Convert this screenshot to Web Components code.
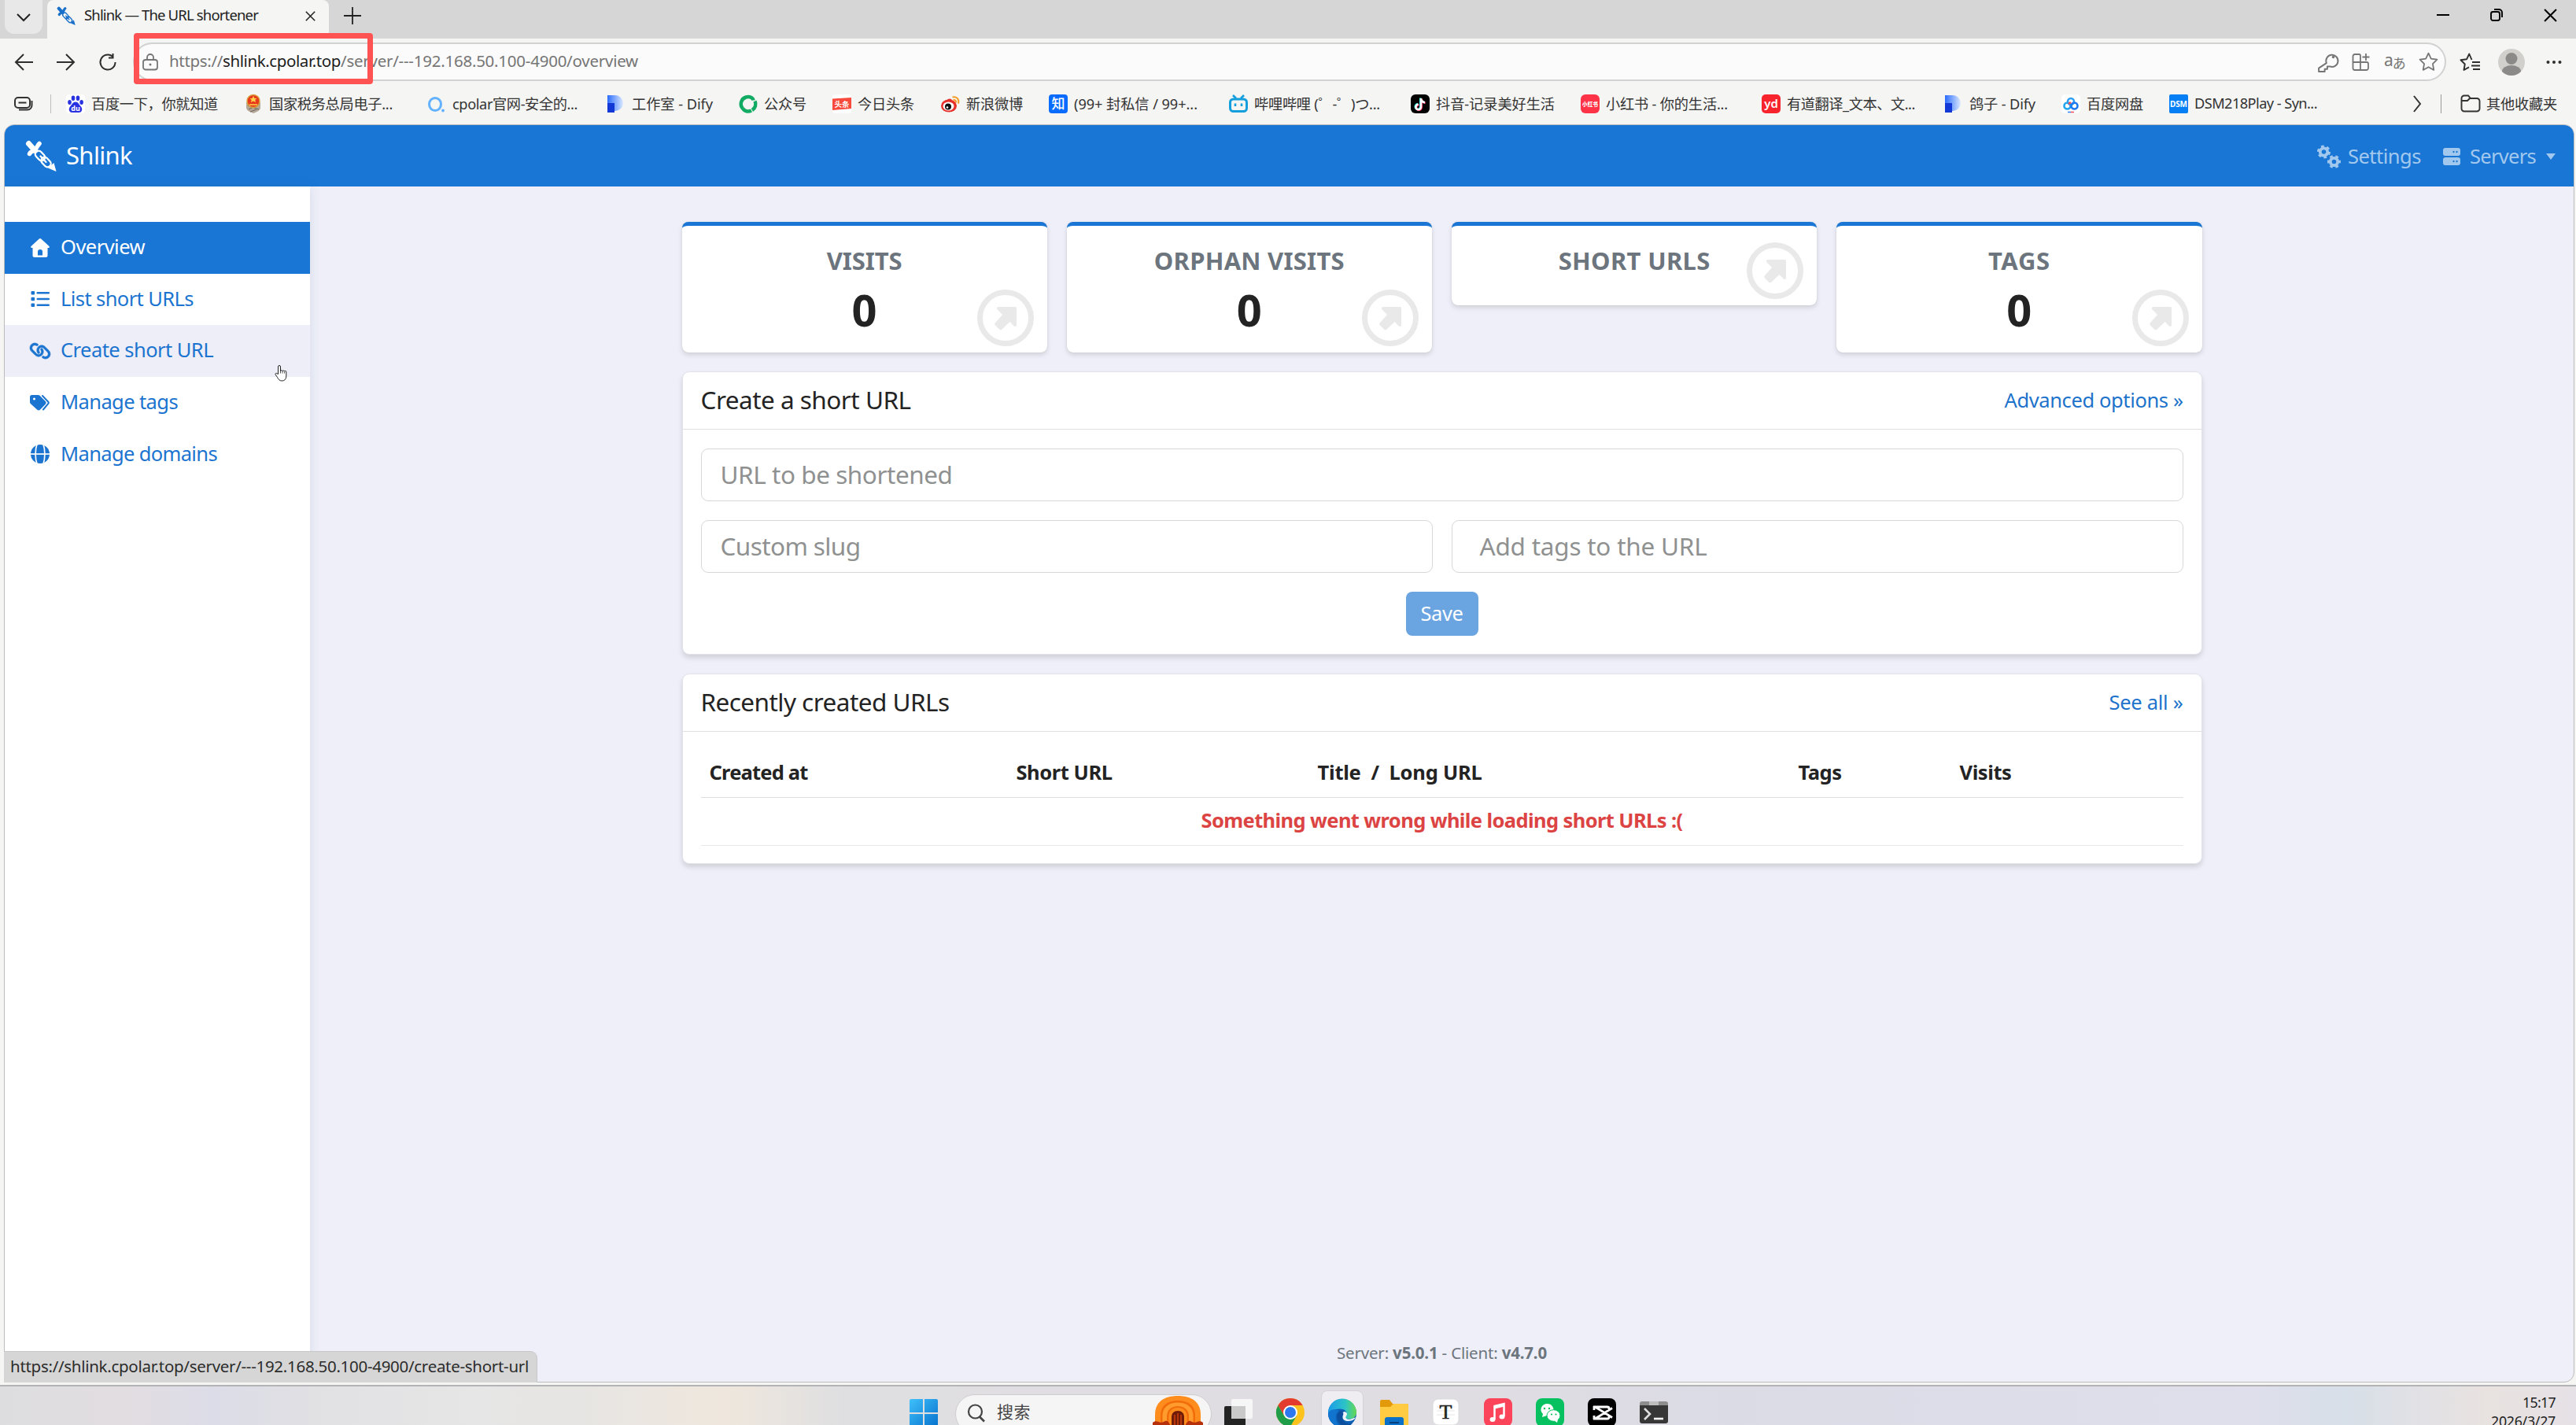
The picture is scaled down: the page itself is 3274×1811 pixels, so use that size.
<!DOCTYPE html>
<html lang="zh-CN">
<head>
<meta charset="utf-8">
<title>Shlink — The URL shortener</title>
<style>
  html, body { margin: 0; height: 100%; }
  body {
    overflow: hidden;
    font-family: "Noto Sans", "Noto Sans CJK SC", sans-serif;
    color: #232323;
    background: #f5f5f4;
  }
</style>
</head>
<body>
<desktop-screen></desktop-screen>

<script>
const ICONS = {
  // browser chrome
  chevronDown: ["0 0 20 12", `<path d="M2 2l8 8 8-8" fill="none" stroke="currentColor" stroke-width="2"/>`],
  chevronRight: ["0 0 12 22", `<path d="M2 1l8 10-8 10" fill="none" stroke="currentColor" stroke-width="2"/>`],
  close: ["0 0 16 16", `<path d="M1 1l14 14M15 1L1 15" fill="none" stroke="currentColor" stroke-width="1.9"/>`],
  plus: ["0 0 22 22", `<path d="M11 0v22M0 11h22" stroke="currentColor" stroke-width="1.8"/>`],
  minimize: ["0 0 16 16", `<path d="M0 8h16" stroke="currentColor" stroke-width="2"/>`],
  restore: ["0 0 16 16", `<rect x="1" y="4" width="11" height="11" rx="2.5" fill="none" stroke="currentColor" stroke-width="1.9"/><path d="M5 1h6a4 4 0 0 1 4 4v6" fill="none" stroke="currentColor" stroke-width="1.9"/>`],
  back: ["0 0 24 22", `<path d="M24 11H2M12 1L2 11l10 10" fill="none" stroke="currentColor" stroke-width="2"/>`],
  forward: ["0 0 24 22", `<path d="M0 11h22M12 1l10 10-10 10" fill="none" stroke="currentColor" stroke-width="2"/>`],
  reload: ["0 0 22 22", `<path d="M20.500 11A9.500 9.500 0 1 1 17 3.700M17.500 0v5.500h-5.500" fill="none" stroke="currentColor" stroke-width="2"/>`],
  lock: ["0 0 20 22", `<rect x="1" y="8" width="18" height="12.500" rx="3" fill="none" stroke="currentColor" stroke-width="1.800"/><path d="M6 8V5a4 4 0 0 1 8 0v3" fill="none" stroke="currentColor" stroke-width="1.800"/><circle cx="10" cy="14" r="1.500" fill="currentColor"/>`],
  key: ["0 0 24 24", `<path d="M10 13a7 7 0 1 1 4 4l-3 0v3H8v3H1v-4z" fill="none" stroke="currentColor" stroke-width="1.800" stroke-linejoin="round"/><circle cx="18" cy="6" r="1.600" fill="currentColor"/>`],
  apps: ["0 0 24 24", `<path d="M11 12V3.500a1.500 1.500 0 0 0-1.500-1.500H4a2.500 2.500 0 0 0-2.500 2.500v15A2.500 2.500 0 0 0 4 22h14.500a2.500 2.500 0 0 0 2.500-2.500V14a2 2 0 0 0-2-2zM1.500 12H11v10M18 1v9M13.500 5.500h9" fill="none" stroke="currentColor" stroke-width="1.800"/>`],
  star: ["0 0 24 24", `<path d="M12 1.500l3.200 6.800 7.300 1-5.300 5.200 1.300 7.500L12 18.400 5.500 22l1.300-7.500L1.500 9.300l7.300-1z" fill="none" stroke="currentColor" stroke-width="1.700" stroke-linejoin="round"/>`],
  starList: ["0 0 26 24", `<path d="M15.500 9l-3.200-7.500L9 8.300l-7.500 1 5.300 5.200L5.500 22l6.500-3.600M16 12h10M15 16.500h11M17 21h9" fill="none" stroke="currentColor" stroke-width="1.900" stroke-linejoin="round"/>`],
  dots: ["0 0 20 6", `<g fill="currentColor"><circle cx="2.500" cy="3" r="2"/><circle cx="10" cy="3" r="2"/><circle cx="17.500" cy="3" r="2"/></g>`],
  avatar: ["0 0 34 34", `<circle cx="17" cy="17" r="17" fill="#d2d0cc"/><circle cx="17" cy="12.500" r="7.500" fill="#8b8a88"/><path d="M5 29a12 8 0 0 1 24 0 17 17 0 0 1-24 0z" fill="#8b8a88"/>`],
  sync: ["0 0 24 18", `<rect x="1" y="1" width="19" height="13" rx="4" fill="none" stroke="currentColor" stroke-width="2"/><path d="M5.500 7.500h10M22.500 5v6a5.500 5.500 0 0 1-5.500 5.500H6" fill="none" stroke="currentColor" stroke-width="2"/>`],
  folder: ["0 0 26 24", `<path d="M1.500 5A3.500 3.500 0 0 1 5 1.500h5L13 5h8a3.500 3.500 0 0 1 3.500 3.500V18a3.500 3.500 0 0 1-3.500 3.500H5A3.500 3.500 0 0 1 1.500 18zM2 8h7l3-3" fill="none" stroke="currentColor" stroke-width="1.900"/>`],
  // bookmark favicons
  baidu: ["0 0 24 24", `<rect width="24" height="24" rx="4" fill="#fff"/><g fill="#2932e1"><ellipse cx="4.500" cy="10" rx="2.300" ry="3"/><ellipse cx="9" cy="4.800" rx="2.300" ry="3.200"/><ellipse cx="15" cy="4.800" rx="2.300" ry="3.200"/><ellipse cx="19.600" cy="10" rx="2.300" ry="3"/><path d="M12 9.500c3.500 0 4 3 7 6 3 4 0 8-3 7.500H8c-3 .5-6-3.500-3-7.500 3-3 3.500-6 7-6z"/></g><text x="12" y="21" font-size="9" font-weight="700" fill="#fff" text-anchor="middle">du</text>`],
  tax: ["0 0 24 24", `<path d="M3 10h18v7c0 3-4 5-9 7-5-2-9-4-9-7z" fill="#b5a898"/><path d="M5 14l14 5M6 19l12-6M8 22l8-3" stroke="#6d6258"/><circle cx="12" cy="8.500" r="8" fill="#e8391d" stroke="#d9a03c" stroke-width="1.500"/><path d="M12 2l1.500 3h3l-2.300 2 1 3L12 8.500 8.800 10l1-3-2.300-2h3z" fill="#ffd34a"/><path d="M7 13h10" stroke="#ffd34a" stroke-width="1.500"/>`],
  cpolar: ["0 0 24 24", `<ellipse cx="10" cy="12.500" rx="7.500" ry="8" fill="none" stroke="#62b2ff" stroke-width="3"/><circle cx="20" cy="20.500" r="1.900" fill="#62b2ff"/>`],
  dify: ["0 0 24 24", `<defs><linearGradient id="d"><stop offset="0" stop-color="#2b6cff"/><stop offset="1" stop-color="#dbe9ff"/></linearGradient></defs><path d="M1 1h10a10 10 0 0 1 0 20H1z" fill="url(#d)"/><path d="M1 11h9v12H1z" fill="#1238d6"/>`],
  mp: ["0 0 24 24", `<g fill="none" stroke="#12ab63" stroke-width="4.500"><path d="M5 18A9 9 0 0 1 9 3.500c5-1.500 9 1 9.500 4"/><path d="M20.500 8.500A9 9 0 0 1 17 20"/><path d="M16 20.500c-4 2-9 1-11-3"/></g>`],
  toutiao: ["0 0 24 24", `<rect width="24" height="24" rx="3" fill="#fff"/><path d="M0 5.500L24 4v14L0 20z" fill="#f84a3c"/><text x="12" y="15.500" font-size="9.500" font-weight="700" fill="#fff" text-anchor="middle">头条</text>`],
  weibo: ["0 0 24 24", `<ellipse cx="10" cy="14.500" rx="10" ry="8" fill="#e6302a"/><path d="M7 8c2-4 8-3 7 1z" fill="#e6302a"/><ellipse cx="9.500" cy="15" rx="7" ry="5.500" fill="#fff"/><circle cx="9" cy="15.500" r="4" fill="#111"/><circle cx="8" cy="16.500" r="1.300" fill="#fff"/><path d="M14.500 3.500c5-1.500 9 2.500 7.500 8M15.500 7c2.500-.5 4 1 3.500 3.500" fill="none" stroke="#f59a22" stroke-width="2"/>`],
  zhihu: ["0 0 24 24", `<rect width="24" height="24" rx="4" fill="#0a6cff"/><text x="12" y="18" font-size="17" font-weight="500" fill="#fff" text-anchor="middle">知</text>`],
  bili: ["0 0 24 24", `<rect x="1.500" y="6" width="21" height="15.500" rx="4" fill="none" stroke="#149fdc" stroke-width="3"/><path d="M5 1l4 4M19 1l-4 4" stroke="#149fdc" stroke-width="2.600"/><path d="M8 11.500v3.500M16 11.500v3.500" stroke="#149fdc" stroke-width="2.600"/>`],
  douyin: ["0 0 24 24", `<rect width="24" height="24" rx="6" fill="#000"/><g fill="none" stroke-width="2.500"><path d="M12.300 4.500v11a3.300 3.300 0 1 1-3.300-3.300M12.300 5c.5 3 2.500 4.500 5 4.700" stroke="#25f4ee"/><path d="M13.700 5.500v11a3.300 3.300 0 1 1-3.300-3.300M13.700 6c.5 3 2.500 4.500 5 4.700" stroke="#fe2c55"/><path d="M13 5v11a3.300 3.300 0 1 1-3.300-3.300M13 5.500c.5 3 2.500 4.500 5 4.700" stroke="#fff"/></g>`],
  xhs: ["0 0 24 24", `<rect width="24" height="24" rx="6" fill="#ff3347"/><text x="12" y="15.300" font-size="6.600" font-weight="900" fill="#fff" text-anchor="middle">小红书</text>`],
  youdao: ["0 0 24 24", `<rect width="24" height="24" rx="5" fill="#f7242e"/><text x="12" y="16.500" font-size="15" font-weight="600" fill="#fff" text-anchor="middle">yd</text>`],
  pan: ["0 0 24 24", `<rect width="24" height="24" rx="5" fill="#fff"/><g fill="none" stroke-width="2.600"><circle cx="12" cy="9" r="4" stroke="#2f9ff5"/><circle cx="7.500" cy="14.500" r="4" stroke="#1fa5ee"/><circle cx="16.500" cy="14.500" r="4" stroke="#1b78f2"/><path d="M9 12l3-2" stroke="#f04e54"/></g><path d="M8 22.500h4" stroke="#2f7ff5" stroke-width="1.500"/><path d="M12 22.500h4" stroke="#f04e54" stroke-width="1.500"/>`],
  dsm: ["0 0 24 24", `<rect width="24" height="24" rx="2" fill="#057ff3"/><text x="12" y="16" font-size="10" font-weight="700" fill="#fff" text-anchor="middle" textLength="22">DSM</text>`],
  // shlink
  shlink: ["0 0 40 40", `<g fill="none" stroke="currentColor" stroke-linecap="round"><path d="M4.500 4.500l8 9" stroke-width="7"/><path d="M18 4.500c-3 3-3 6-6 8s-5 2-6.500 5" stroke-width="5.500"/><g stroke-width="2.300"><rect x="-7" y="-4.300" width="14" height="8.600" rx="4.300" transform="translate(19 20) rotate(46)"/><rect x="-7" y="-4.300" width="14" height="8.600" rx="4.300" transform="translate(26.500 28) rotate(46)"/><path d="M19.500 20.500l7 7.500"/></g></g><path d="M29 35.500l7.500-6.500L39.500 40z" fill="currentColor"/>`],
  home: ["0 0 24 24", `<path fill-rule="evenodd" d="M10.800.6a1.800 1.800 0 0 1 2.400 0L23.500 10c.8.800.4 2-.7 2H21.500v9.500A2.500 2.500 0 0 1 19 24H5a2.500 2.500 0 0 1-2.500-2.500V12H1.200C.1 12-.3 10.800.5 10zM9 21.500h6V17a3 3 0 0 0-6 0z" fill="currentColor"/>`],
  list: ["0 0 24 24", `<g fill="currentColor"><rect x=".5" y="2" width="4.600" height="4.600" rx="1"/><rect x=".5" y="9.700" width="4.600" height="4.600" rx="1"/><rect x=".5" y="17.400" width="4.600" height="4.600" rx="1"/><rect x="7.500" y="3" width="16.500" height="2.600" rx="1.300"/><rect x="7.500" y="10.700" width="16.500" height="2.600" rx="1.300"/><rect x="7.500" y="18.400" width="16.500" height="2.600" rx="1.300"/></g>`],
  link: ["0 0 640 512", `<path transform="matrix(-1 0 0 1 640 0)" fill="currentColor" stroke="currentColor" stroke-width="14" d="M579.800 267.700c56.500-56.500 56.500-148 0-204.500c-50-50-128.800-56.500-186.300-15.400l-1.600 1.100c-14.400 10.300-17.700 30.300-7.400 44.600s30.300 17.700 44.600 7.400l1.600-1.100c32.100-22.900 76-19.300 103.800 8.600c31.500 31.500 31.500 82.500 0 114L422.300 334.800c-31.500 31.500-82.500 31.500-114 0c-27.900-27.900-31.500-71.800-8.600-103.800l1.100-1.600c10.300-14.400 6.900-34.400-7.400-44.600s-34.400-6.900-44.600 7.400l-1.100 1.600C206.500 251.200 213 330 263 380c56.500 56.500 148 56.500 204.500 0L579.800 267.700zM60.200 244.300c-56.500 56.500-56.500 148 0 204.500c50 50 128.800 56.500 186.300 15.400l1.600-1.100c14.400-10.300 17.700-30.300 7.400-44.600s-30.300-17.700-44.600-7.400l-1.600 1.100c-32.100 22.900-76 19.300-103.800-8.600C74 372 74 321 105.500 289.500L217.700 177.200c31.500-31.500 82.500-31.500 114 0c27.900 27.900 31.500 71.800 8.600 103.900l-1.100 1.600c-10.300 14.400-6.900 34.400 7.400 44.600s34.400 6.900 44.600-7.400l1.100-1.600C433.500 260.800 427 182 377 132c-56.500-56.500-148-56.500-204.500 0L60.200 244.300z"/>`],
  tags: ["0 0 26 24", `<path fill-rule="evenodd" fill="currentColor" d="M0 4.500A2.500 2.500 0 0 1 2.500 2h8c.8 0 1.500.3 2 .8l7 7a3 3 0 0 1 0 4.200l-6.300 6.400a3 3 0 0 1-4.200 0L.8 13A3 3 0 0 1 0 11zm5.500 1a1.500 1.500 0 1 0 .01 0z"/><path d="M16 3l7.300 7.700a1.500 1.500 0 0 1 0 2.200L17 20.500" fill="none" stroke="currentColor" stroke-width="2" stroke-linecap="round"/>`],
  globe: ["0 0 24 24", `<circle cx="12" cy="12" r="12" fill="currentColor"/><g fill="none" stroke="#fff" stroke-width="1.700"><path d="M0 12h24"/><path d="M8 -.5C5.500 6.500 5.500 17.500 8 24.500M16 -.5c2.500 7 2.500 18 0 25"/></g>`],
  gears: ["0 0 30 30", `<g fill="none" stroke="currentColor"><circle cx="8.500" cy="9" r="4.700" stroke-width="3.800"/><circle cx="8.500" cy="9" r="7" stroke-width="3" stroke-dasharray="3.700 3.630"/><circle cx="21.500" cy="21.500" r="4.700" stroke-width="3.800"/><circle cx="21.500" cy="21.500" r="7" stroke-width="3" stroke-dasharray="3.700 3.630" stroke-dashoffset="2"/></g>`],
  server: ["0 0 22 22", `<path fill-rule="evenodd" fill="currentColor" d="M3 0h16a3 3 0 0 1 3 3v4a3 3 0 0 1-3 3H3a3 3 0 0 1-3-3V3a3 3 0 0 1 3-3zm10.500 3.800a1.200 1.200 0 1 0 .01 0zm4 0a1.200 1.200 0 1 0 .01 0zM3 12h16a3 3 0 0 1 3 3v4a3 3 0 0 1-3 3H3a3 3 0 0 1-3-3v-4a3 3 0 0 1 3-3zm10.500 3.800a1.200 1.200 0 1 0 .01 0zm4 0a1.200 1.200 0 1 0 .01 0z"/>`],
  caret: ["0 0 12 8", `<path d="M0 0h12L6 8z" fill="currentColor"/>`],
  goto: ["0 0 72 72", `<circle cx="36" cy="36" r="32.500" fill="none" stroke="#e9e9e9" stroke-width="7"/><path d="M27 22h21.500a1.500 1.500 0 0 1 1.500 1.500V45c0 2-2 2.600-3.400 1.200L41.500 41l-10 9.500a2.500 2.500 0 0 1-3.500 0l-5-5a2.500 2.500 0 0 1 0-3.500L32 32l-6.300-6.500C24.200 24 25.200 22 27 22z" fill="#e9e9e9"/>`],
  hand: ["0 0 16 22", `<path d="M4.500 12.500V3a1.500 1.500 0 0 1 3 0v5.500a1.300 1.300 0 0 1 2.500.2 1.300 1.300 0 0 1 2.500.4 1.200 1.200 0 0 1 2.300.6V15c0 4-2.300 6-5.300 6s-4.500-1.500-6-4.500L1 12.800c-.6-1.300 1.400-2 2.200-1z" fill="#fff" stroke="#222" stroke-width="1"/><path d="M7.500 8v3.500M10 9v2.500M12.500 9.500v2" stroke="#222" stroke-width=".8"/>`],
  // taskbar
  windows: ["0 0 36 36", `<defs><linearGradient id="w" x2="1" y2="1"><stop offset="0" stop-color="#3fc0fb"/><stop offset="1" stop-color="#0671cc"/></linearGradient></defs><path d="M2 0h15v17H0V2a2 2 0 0 1 2-2zM19 0h15a2 2 0 0 1 2 2v15H19zM0 19h17v17H2a2 2 0 0 1-2-2zM19 19h17v15a2 2 0 0 1-2 2H19z" fill="url(#w)"/>`],
  search: ["0 0 24 24", `<circle cx="10.500" cy="10" r="8.500" fill="none" stroke="currentColor" stroke-width="2.200"/><path d="M16 16.500l6 6" stroke="currentColor" stroke-width="2.600"/>`],
  arches: ["0 0 64 44", `<path d="M3 40V24C3 8 14 0 32 0s29 8 29 24v16z" fill="#ff8d1e"/><path d="M10 40V25C10 12 19 6 32 6s22 6 22 19v15z" fill="#f36c0c"/><path d="M12.500 40V25C12.500 14 21 8.500 32 8.500S51.500 14 51.500 25v15z" fill="#ff9c2d"/><path d="M18 40V26c0-8 6-13 14-13s14 5 14 13v14z" fill="#f36c0c"/><path d="M20.500 40V26c0-7 5-11 11.500-11s11.500 4 11.500 11v14z" fill="#ff8d1e"/><path d="M24 40V27c0-5 3-8 8-8s8 3 8 8v13z" fill="#701c08"/><path d="M28 24v16M32 22v18M36 24v16" stroke="#b8360c" stroke-width="2"/><path d="M0 34c5-5 9 2 14-1s6 0 9 5v6H0zM64 34c-5-5-9 2-14-1s-6 0-9 5v6h23zM22 37h20v7H22z" fill="#b7300c"/>`],
  taskview: ["0 0 36 36", `<rect y="10" width="27" height="26" rx="2" fill="#232323"/><rect x="9" y="1" width="27" height="25" rx="2" fill="#f7f7f7" opacity=".93"/><path d="M9 10h18v16H9z" fill="#c9c9c9"/>`],
  chrome: ["0 0 36 36", `<circle cx="18" cy="18" r="18" fill="#fcc31e"/><path d="M2.400 9a18 18 0 0 1 31.200 0H18l-7.800 13.500z" fill="#e33b2e"/><path d="M2.400 9A18 18 0 0 0 18 36l7.800-13.500H10.200z" fill="#1f9d49"/><circle cx="18" cy="18" r="9" fill="#fff"/><circle cx="18" cy="18" r="7" fill="#2d78ee"/>`],
  edge: ["0 0 36 36", `<defs><linearGradient id="e"><stop offset="0" stop-color="#1b9be8"/><stop offset=".6" stop-color="#2cc3c8"/><stop offset="1" stop-color="#68d850"/></linearGradient></defs><circle cx="18" cy="18" r="18" fill="#0d5fb5"/><path d="M0 18a18 18 0 0 1 36-1c0 6-5 8.500-10 8.500-4 0-5-2-3.500-4 3-4-1-9-7-9C8 12.500 2 16 0 18z" fill="url(#e)"/><path d="M14 16c-4 3-4 12 3 17 5 3 11 1 14-2-7 2-13-2-13-8 0-3 2-4 1-6s-3-2-5-1z" fill="#0b4f9e"/><path d="M18.500 17c2 2 0 3.500 0 6 0 4.500 6 6.500 12.500 4l3-2c2-3-1-1-5 .5-5 1-8-1-6-4 2.500-3 0-5-2-5.500z" fill="#eef4fb"/><path d="M0 18c2-5 9-6 14-3-5 3-7 12 2 21A18 18 0 0 1 0 18z" fill="#1174cf"/>`],
  explorer: ["0 0 36 36", `<path d="M0 4a2 2 0 0 1 2-2h10l4 5h18a2 2 0 0 1 2 2v27H0z" fill="#e29a0a"/><path d="M0 11h13l4-4h17a2 2 0 0 1 2 2v27H0z" fill="#fecb42"/><path d="M6 36V27a3 3 0 0 1 3-3h18a3 3 0 0 1 3 3v9z" fill="#0b70c8"/><path d="M12 31h12" stroke="#063f7a" stroke-width="2"/>`],
  typora: ["0 0 36 36", `<rect x="1" y="1" width="33" height="33" rx="7" fill="#fff" stroke="#d9d9d9"/><path d="M6 11h23M6 16h23M6 21h23" stroke="#e6e6e6"/><text x="17.500" y="26" font-size="26" font-family="Liberation Serif, serif" fill="#222" stroke="#222" stroke-width=".6" text-anchor="middle">T</text>`],
  music: ["0 0 36 36", `<rect width="36" height="36" rx="8" fill="#fb4459"/><path d="M13.500 27V10l12-3v16" fill="none" stroke="#fff" stroke-width="2.500"/><path d="M13.500 12l12-3" stroke="#fff" stroke-width="3"/><ellipse cx="11" cy="27" rx="3.500" ry="3" fill="#fff"/><ellipse cx="23" cy="23.500" rx="3.500" ry="3" fill="#fff"/>`],
  wechat: ["0 0 36 36", `<rect width="36" height="36" rx="8" fill="#07c160"/><path d="M8 24l1-4a8 7.500 0 1 1 5 2z" fill="#fff"/><ellipse cx="22.500" cy="22" rx="8.500" ry="7.300" fill="#fff" stroke="#07c160"/><path d="M27 31l-4-3 5-1z" fill="#fff"/><g fill="#07c160"><circle cx="11" cy="13" r="1.200"/><circle cx="17" cy="13" r="1.200"/><circle cx="20" cy="20.500" r="1.100"/><circle cx="25.500" cy="20.500" r="1.100"/></g>`],
  capcut: ["0 0 36 36", `<rect width="36" height="36" rx="8" fill="#000"/><path d="M31 12.500L10 25.500M31 24.500L10 11.500M7 11h18a2 2 0 0 1 2 2v2M7 26h18a2 2 0 0 0 2-2v-2M8 10v5M8 27v-5" fill="none" stroke="#fff" stroke-width="2.800"/>`],
  terminal: ["0 0 36 36", `<path d="M0 7a3 3 0 0 1 3-3h30a3 3 0 0 1 3 3v3H0z" fill="#8e8e8e"/><path d="M12 4h12v6H12z" fill="#bdbdbd"/><path d="M0 9h36v20a3 3 0 0 1-3 3H3a3 3 0 0 1-3-3z" fill="#373737"/><path d="M6 13l7 7-7 7" fill="none" stroke="#ddd" stroke-width="2.600"/><path d="M18 26h12" stroke="#fff" stroke-width="2.600"/>`],
};

const BOOKMARKS = [
  { icon: "baidu", text: "百度一下，你就知道", w: 161, slot: 226 },
  { icon: "tax", text: "国家税务总局电子...", w: 157, slot: 233 },
  { icon: "cpolar", text: "cpolar官网-安全的...", w: 159, slot: 228 },
  { icon: "dify", text: "工作室 - Dify", w: 103, slot: 168 },
  { icon: "mp", text: "公众号", w: 54, slot: 119 },
  { icon: "toutiao", text: "今日头条", w: 72, slot: 138 },
  { icon: "weibo", text: "新浪微博", w: 72, slot: 137 },
  { icon: "zhihu", text: "(99+ 封私信 / 99+...", w: 157, slot: 229 },
  { icon: "bili", text: "哔哩哔哩 (゜-゜)つ...", w: 160, slot: 231 },
  { icon: "douyin", text: "抖音-记录美好生活", w: 151, slot: 216 },
  { icon: "xhs", text: "小红书 - 你的生活...", w: 155, slot: 230 },
  { icon: "youdao", text: "有道翻译_文本、文...", w: 163, slot: 232 },
  { icon: "dify", text: "鸽子 - Dify", w: 84, slot: 149 },
  { icon: "pan", text: "百度网盘", w: 72, slot: 137 },
  { icon: "dsm", text: "DSM218Play - Syn...", w: 156, slot: 200 },
];

const icon = (name, width, height = width) =>
  `<ui-icon name="${name}" width="${width}" height="${height}"></ui-icon>`;

function component(name, styles, markup) {
  customElements.define(
    name,
    class extends HTMLElement {
      constructor() {
        super();
        this.attachShadow({ mode: "open" });
      }

      connectedCallback() {
        this.shadowRoot.innerHTML = `<style>* { box-sizing: border-box; } ${styles}</style>${markup(this)}`;
      }
    },
  );
}

component("desktop-screen", `
  :host { display: flex; flex-direction: column; width: 3274px; height: 1811px; overflow: hidden; position: relative; }
  .page { flex: none; display: flex; flex-direction: column; height: 1599px; margin: 0 2px 3px 5px; border: 1px solid #bcbcbc; border-radius: 13px 13px 13px 0; overflow: hidden; background: #eeeff8; }
  .columns { flex: 1; display: flex; min-height: 0; }
  .marker { position: absolute; left: 170px; top: 42px; width: 304px; height: 65px; border: 7px solid #ff5252; border-radius: 4px; }
  .pointer { position: absolute; left: 349px; top: 463px; }
  .status { position: absolute; left: 5px; top: 1717px; width: 678px; height: 40px; padding-left: 8px; display: flex; align-items: center; background: #d6d6d6; border-top: 1px solid #c8c8c8; border-right: 1px solid #c8c8c8; border-radius: 0 9px 0 0; font-size: 20.500px; color: #2c2c2c; }
`, () => `
  <tab-strip></tab-strip>
  <address-bar></address-bar>
  <bookmark-bar></bookmark-bar>
  <div class="page">
    <shlink-header></shlink-header>
    <div class="columns">
      <side-menu></side-menu>
      <overview-page></overview-page>
    </div>
  </div>
  <task-bar></task-bar>
  <div class="status"><fit-text w="659">https://shlink.cpolar.top/server/---192.168.50.100-4900/create-short-url</fit-text></div>
  <div class="marker"></div>
  <div class="pointer">${icon("hand", 16, 22)}</div>
`);

component("tab-strip", `
  :host { display: flex; flex: none; height: 49px; background: #d6d6d6; color: #222; }
  .list { width: 48px; height: 43px; margin-left: 6px; display: flex; align-items: center; justify-content: center; background: #e8e8e8; border-radius: 0 0 12px 12px; }
  .tab { width: 358px; margin-left: 6px; padding: 0 17px 9px 12px; display: flex; align-items: center; background: #f5f5f4; border-radius: 8px 8px 0 0; font-size: 18.500px; }
  .tab fit-text { margin: 0 auto 0 11px; }
  .logo { color: #1b70c9; display: flex; }
  .new { margin-left: 19px; padding-bottom: 10px; display: flex; align-items: center; }
  .window { margin-left: auto; padding: 0 24px 11px 0; display: flex; align-items: center; gap: 52px; color: #000; }
`, () => `
  <div class="list">${icon("chevronDown", 20, 12)}</div>
  <div class="tab"><span class="logo">${icon("shlink", 24)}</span><fit-text w="221">Shlink — The URL shortener</fit-text>${icon("close", 13)}</div>
  <div class="new">${icon("plus", 22)}</div>
  <div class="window">${icon("minimize", 16)}${icon("restore", 16)}${icon("close", 17)}</div>
`);

component("address-bar", `
  :host { display: flex; flex: none; align-items: center; height: 60px; padding: 0 18px 1px; color: #2e2e2e; }
  .nav { display: flex; gap: 30px; width: 151px; }
  .pill { display: flex; align-items: center; width: 2940px; height: 49px; padding: 0 8px 0 10px; border: 2px solid #d2d2d2; border-radius: 25px; background: #fbfbfb; color: #757575; font-size: 20.500px; }
  .url { display: flex; margin: 0 auto 0 14px; }
  b { font-weight: 400; color: #1d1d1d; }
  .tools { display: flex; align-items: center; gap: 17px; }
  .lang { display: flex; align-items: baseline; width: 27px; font-size: 21px; line-height: 26px; padding-bottom: 3px; letter-spacing: -1px; }
  .lang small { font-size: 17px; position: relative; top: 3px; }
  .menu { display: flex; align-items: center; margin-left: 17px; gap: 27px; }
  .menu ui-icon:first-child { margin-right: -4px; }
`, () => `
  <div class="nav">${icon("back", 24, 22)}${icon("forward", 24, 22)}${icon("reload", 22)}</div>
  <div class="pill">
    ${icon("lock", 20, 22)}
    <span class="url"><fit-text w="68">https://</fit-text><b><fit-text w="150">shlink.cpolar.top</fit-text></b><fit-text w="378">/server/---192.168.50.100-4900/overview</fit-text></span>
    <div class="tools">${icon("key", 26)}${icon("apps", 24)}<span class="lang">a<small>あ</small></span>${icon("star", 25)}</div>
  </div>
  <div class="menu">${icon("starList", 26, 24)}${icon("avatar", 34)}${icon("dots", 20, 6)}</div>
`);

component("bookmark-bar", `
  :host { display: flex; flex: none; align-items: center; height: 49px; padding: 0 0 3px 18px; color: #333; }
  .rule { width: 1px; height: 24px; background: #bdbdbd; margin: 0 19px 0 22px; }
  .more { display: flex; align-items: center; margin-left: 109px; font-size: 18.200px; }
  .more .rule { margin: 0 24px; background: #999; }
  .more fit-text { margin-left: 7px; }
`, () => `
  ${icon("sync", 24, 18)}<span class="rule"></span>
  ${BOOKMARKS.map((b) => `<bookmark-item icon="${b.icon}" w="${b.w}" style="width:${b.slot}px">${b.text}</bookmark-item>`).join("")}
  <div class="more">${icon("chevronRight", 12, 22)}<span class="rule"></span>${icon("folder", 26, 24)}<fit-text w="90">其他收藏夹</fit-text></div>
`);

component("bookmark-item", `
  :host { display: flex; flex: none; align-items: center; gap: 8px; font-size: 18.200px; }
`, (el) => `${icon(el.getAttribute("icon"), 24)}<fit-text w="${el.getAttribute("w")}"><slot></slot></fit-text>`);

component("shlink-header", `
  :host { display: flex; flex: none; align-items: center; height: 78px; padding: 0 23px 0 26px; background: #1976d5; color: #fff; font-size: 25.500px; }
  .brand { display: flex; align-items: center; gap: 12px; font-size: 31px; margin-right: auto; }
  nav { display: flex; align-items: center; color: #a3c8ee; padding-top: 2px; }
  nav fit-text { margin: 0 28px 0 9px; }
  nav fit-text:nth-of-type(2) { margin: 0 13px 0 12px; }
`, () => `
  <div class="brand">${icon("shlink", 40)}<fit-text w="84">Shlink</fit-text></div>
  <nav>${icon("gears", 30)}<fit-text w="93">Settings</fit-text>${icon("server", 22)}<fit-text w="84">Servers</fit-text>${icon("caret", 12, 8)}</nav>
`);

component("side-menu", `
  :host { display: block; flex: none; width: 388px; padding-top: 45px; background: #fff; box-shadow: 0 0 14px rgba(60, 90, 130, .12); position: relative; }
`, () => `
  <menu-item icon="home" w="107" active>Overview</menu-item>
  <menu-item icon="list" w="169">List short URLs</menu-item>
  <menu-item icon="link" w="194" hover>Create short URL</menu-item>
  <menu-item icon="tags" w="149">Manage tags</menu-item>
  <menu-item icon="globe" w="199">Manage domains</menu-item>
`);

component("menu-item", `
  :host { display: flex; align-items: center; height: 65.600px; padding-left: 31px; color: #1b74cf; font-size: 25.500px; }
  :host([active]) { background: #1976d5; color: #fff; }
  :host([hover]) { background: #edeef8; }
  .icon { display: flex; justify-content: center; width: 28px; margin-right: 12px; }
`, (el) => {
  const name = el.getAttribute("icon");
  const width = { link: 28, tags: 26 }[name] || 24;
  return `<span class="icon">${icon(name, width, name === "link" ? 22 : 24)}</span><fit-text w="${el.getAttribute("w")}"><slot></slot></fit-text>`;
});

component("overview-page", `
  :host { display: flex; flex: 1; flex-direction: column; align-items: center; padding: 45px 0 20px; }
  main { width: 1932px; display: flex; flex-direction: column; gap: 24px; }
  .stats { display: grid; grid-template-columns: repeat(4, 1fr); gap: 25px; align-items: start; }
  .form { display: flex; flex-direction: column; align-items: center; gap: 24px; padding: 24px 23px 23px; }
  .pair { display: grid; grid-template-columns: 1fr 1fr; gap: 24px; align-self: stretch; }
  button { width: 92px; height: 56px; padding: 0; border: 0; border-radius: 8px; background: #6aa4e1; color: #fff; font: inherit; font-size: 25.500px; }
  footer { margin-top: auto; font-size: 20.500px; color: #6c757d; }
`, () => `
  <main>
    <div class="stats">
      <stat-card w="96" value="0">VISITS</stat-card>
      <stat-card w="242" value="0">ORPHAN VISITS</stat-card>
      <stat-card w="193">SHORT URLS</stat-card>
      <stat-card w="79" value="0">TAGS</stat-card>
    </div>
    <content-card>
      <fit-text slot="title" w="267">Create a short URL</fit-text>
      <fit-text slot="link" w="227">Advanced options »</fit-text>
      <div class="form">
        <text-field style="align-self:stretch"><fit-text w="295">URL to be shortened</fit-text></text-field>
        <div class="pair">
          <text-field><fit-text w="178">Custom slug</fit-text></text-field>
          <text-field style="--inset:35px"><fit-text w="289">Add tags to the URL</fit-text></text-field>
        </div>
        <button><fit-text w="54">Save</fit-text></button>
      </div>
    </content-card>
    <content-card>
      <fit-text slot="title" w="316">Recently created URLs</fit-text>
      <fit-text slot="link" w="94">See all »</fit-text>
      <url-table></url-table>
    </content-card>
  </main>
  <footer><fit-text w="267">Server: <b>v5.0.1</b> - Client: <b>v4.7.0</b></fit-text></footer>
`);

component("stat-card", `
  :host { display: flex; flex-direction: column; align-items: center; height: 106px; padding-top: 24px; position: relative; background: #fff; border-top: 5px solid #1976d5; border-radius: 8px; box-shadow: 0 3px 6px rgba(0, 0, 0, .13), 0 0 1px rgba(0, 0, 0, .2); box-sizing: border-box; }
  :host([value]) { height: 166px; }
  h5 { margin: 0; height: 41px; line-height: 41px; font-size: 31px; font-weight: 700; color: #6c757d; }
  .value { margin-top: 8px; font-size: 56px; line-height: 66px; font-weight: 700; }
  .goto { position: absolute; right: 17px; bottom: 8px; display: flex; }
`, (el) => `
  <h5><fit-text w="${el.getAttribute("w")}"><slot></slot></fit-text></h5>
  ${el.hasAttribute("value") ? `<div class="value">${el.getAttribute("value")}</div>` : ""}
  <span class="goto">${icon("goto", 72)}</span>
`);

component("content-card", `
  :host { display: block; background: #fff; border: 1px solid #e2e3ea; border-radius: 9px; box-shadow: 0 4px 6px rgba(0, 0, 0, .13); }
  header { display: flex; align-items: center; justify-content: space-between; height: 73px; padding: 0 23px; border-bottom: 1px solid #dfdfdf; }
  ::slotted([slot="title"]) { font-size: 31.500px; }
  ::slotted([slot="link"]) { font-size: 25.500px; color: #1d73cb; }
`, () => `<header><slot name="title"></slot><slot name="link"></slot></header><slot></slot>`);

component("text-field", `
  :host { display: flex; align-items: center; box-sizing: border-box; height: 67px; padding-left: var(--inset, 24px); border: 1px solid #d8d8d8; border-radius: 9px; font-size: 31.500px; color: #8f9191; }
`, () => `<slot></slot>`);

component("url-table", `
  :host { display: block; padding: 22px 23px; font-size: 25.500px; }
  table { width: 100%; border-collapse: collapse; table-layout: fixed; }
  th { height: 61px; padding: 0 0 0 11px; text-align: left; border-bottom: 1px solid #dfdfdf; }
  td { height: 61px; padding: 0; text-align: center; font-weight: 700; color: #dc4444; border-bottom: 1px solid #e8e8e8; }
`, () => `
  <table>
    <colgroup><col style="width:390px"><col style="width:383px"><col style="width:611px"><col style="width:205px"><col></colgroup>
    <tr>
      <th><fit-text w="125">Created at</fit-text></th>
      <th><fit-text w="122">Short URL</fit-text></th>
      <th><fit-text w="209">Title&nbsp; /&nbsp; Long URL</fit-text></th>
      <th><fit-text w="55">Tags</fit-text></th>
      <th><fit-text w="66">Visits</fit-text></th>
    </tr>
    <tr><td colspan="5"><fit-text w="612">Something went wrong while loading short URLs :(</fit-text></td></tr>
  </table>
`);

component("task-bar", `
  :host { display: flex; flex: none; height: 52px; padding-left: 1156px; border-top: 2px solid #b3b3b5; overflow: hidden; box-sizing: border-box;
    background: linear-gradient(90deg, #dddddf 0, #e2dde1 160px, #dcdce8 270px, #e1e0e3 400px, #e6e6e6 600px, #e7e5e3 740px, #efe7dd 920px, #dfdfe1 1070px, #e0dde2 1400px, #dfdde2 1900px, #dbdbe6 2200px, #dfdfeb 2850px, #d7dfe8 2980px, #e2e1e5 3080px, #e8e2e0 3160px, #e6e1e6 3274px) border-box; }
  .search { display: flex; flex: none; align-items: center; width: 326px; height: 50px; margin: 10px 18px 0 22px; padding: 0 10px 3px 14px; background: #f6f5f6; border: 1px solid #cfcdd0; border-radius: 25px; font-size: 21px; line-height: 24px; color: #444; }
  .search fit-text { margin: 0 auto 0 14px; }
  .apps { display: flex; flex: none; margin-left: -17px; }
  .apps > span { width: 66px; padding-top: 15px; height: 60px; display: flex; justify-content: center; }
  .apps .active { width: 54px; margin: 5px 6px 0; padding-top: 10px; background: #efedf1; border: 1px solid #d5d2d8; border-radius: 8px; }
  .start { margin-top: 16px; flex: none; }
  .clock { display: flex; flex-direction: column; align-items: flex-end; margin: 10px 26px 0 auto; font-size: 17.800px; line-height: 21px; color: #222; }
`, () => `
  <span class="start">${icon("windows", 36)}</span>
  <div class="search">${icon("search", 24)}<fit-text w="43">搜索</fit-text>${icon("arches", 64, 44)}</div>
  <div class="apps">
    ${["taskview", "chrome", "edge", "explorer", "typora", "music", "wechat", "capcut", "terminal"]
      .map((name) => `<span class="${name === "edge" ? "active" : ""}">${icon(name, 36)}</span>`).join("")}
  </div>
  <div class="clock"><fit-text w="42">15:17</fit-text><fit-text w="82">2026/3/27</fit-text></div>
`);

component("ui-icon", `
  :host { display: inline-flex; flex: none; }
  svg { display: block; overflow: visible; }
`, (el) => {
  const [viewBox, shapes] = ICONS[el.getAttribute("name")];
  return `<svg viewBox="${viewBox}" width="${el.getAttribute("width")}" height="${el.getAttribute("height")}">${shapes}</svg>`;
});

// Tracks its text in or out so the label takes up exactly "w" pixels.
class FitText extends HTMLElement {
  connectedCallback() {
    if (!this.shadowRoot) {
      this.attachShadow({ mode: "open" }).innerHTML =
        `<style>:host { display: inline-block; flex: none; padding-bottom: 3px; white-space: pre; }</style><slot></slot>`;
    }
    const slot = this.querySelector("slot");
    const text = slot
      ? slot.assignedNodes().map((node) => node.textContent).join("")
      : this.textContent;
    const natural = this.getBoundingClientRect().width;
    const spacing = (this.getAttribute("w") - natural) / Array.from(text).length;
    this.style.letterSpacing = `${spacing.toFixed(3)}px`;
  }
}

customElements.define("fit-text", FitText);
</script>
</body>
</html>
